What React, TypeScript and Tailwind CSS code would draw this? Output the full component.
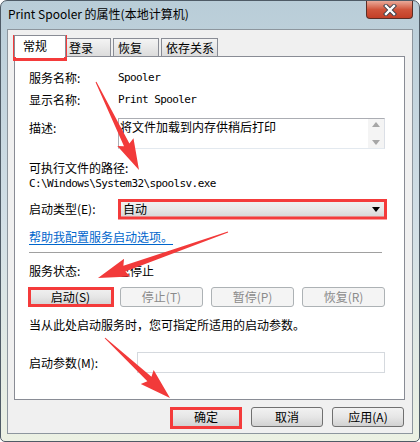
import type React from "react"

// Win7 style push button
function Btn({ children, disabled, def, className = "" }: { children: React.ReactNode; disabled?: boolean; def?: boolean; className?: string }) {
  if (disabled) {
    return (
      <div className={`flex h-[20px] items-center justify-center rounded-[3px] border border-[#adb2b5] bg-[#f4f4f4] text-[#8b8b8b] ${className}`}>
        {children}
      </div>
    )
  }
  return (
    <div
      className={`flex h-[20px] items-center justify-center rounded-[3px] border ${def ? "border-[#3c7fb1]" : "border-[#707070]"} bg-linear-to-b from-[#f2f2f2] via-[#e6e6e6] to-[#d2d2d2] ${className}`}
    >
      {children}
    </div>
  )
}

function arrow(x1: number, y1: number, x2: number, y2: number, headLen: number, headW: number, w0: number, w1: number) {
  const dx = x2 - x1
  const dy = y2 - y1
  const len = Math.hypot(dx, dy)
  const ux = dx / len
  const uy = dy / len
  const px = -uy
  const py = ux
  const bx = x2 - ux * headLen
  const by = y2 - uy * headLen
  const wx = bx - ux * 3
  const wy = by - uy * 3
  const pts = [
    [x1 + (px * w0) / 2, y1 + (py * w0) / 2],
    [bx + (px * w1) / 2, by + (py * w1) / 2],
    [wx + (px * headW) / 2, wy + (py * headW) / 2],
    [x2, y2],
    [wx - (px * headW) / 2, wy - (py * headW) / 2],
    [bx - (px * w1) / 2, by - (py * w1) / 2],
    [x1 - (px * w0) / 2, y1 - (py * w0) / 2],
  ]
  return pts.map((p) => p.join(",")).join(" ")
}

const mono = "font-['DejaVu_Sans_Mono',monospace] text-[11px] tracking-[-0.6px]"

export default function App() {
  return (
    <div className="relative h-[442px] w-[420px] overflow-hidden rounded-t-[7px] rounded-b-[5px] border border-[#4f5b66] bg-linear-to-b from-[#b9cdd8] via-[#d2dfe6] to-[#ecf1e3] font-['Noto_Sans_CJK_SC','Noto_Sans',sans-serif] text-[12px] leading-[16px] text-black">
      {/* title bar */}
      <div className="flex h-[28px] items-start justify-between">
        <span className="pl-[7px] pt-[4px] text-[12px] leading-[18px]">Print Spooler 的属性(本地计算机)</span>
        <div className="mr-[6px] flex h-[18px] w-[47px] items-center justify-center rounded-b-[4px] border border-t-0 border-[#5b2e26] bg-linear-to-b from-[#e9a999] via-[#d0553c] to-[#c33f27]">
          <svg width="14" height="12" viewBox="0 0 14 12">
            <path d="M3 2 L11 10 M11 2 L3 10" stroke="#3a3f4a" strokeWidth="4.2" strokeLinecap="square" />
            <path d="M3 2 L11 10 M11 2 L3 10" stroke="#ffffff" strokeWidth="2.4" strokeLinecap="square" />
          </svg>
        </div>
      </div>

      {/* dialog face */}
      <div className="mx-[6px] h-[405px] border border-[#8d969e] bg-[#f0f0f0]">
        {/* tabs */}
        <div className="ml-[6px] mt-[5px] flex h-[21px] items-end">
          <div className="relative z-10 -mb-px flex h-[22px] w-[52px] items-start border border-b-0 border-[#898c95] bg-white pl-[8px] pt-[2px]">
            常规
          </div>
          <div className="flex h-[18px] w-[45px] items-center border border-b-0 border-l-0 border-[#898c95] bg-linear-to-b from-[#f4f4f4] to-[#dcdcdc] pl-[3px]">
            登录
          </div>
          <div className="ml-[2px] flex h-[18px] w-[46px] items-center border border-b-0 border-[#898c95] bg-linear-to-b from-[#f4f4f4] to-[#dcdcdc] pl-[4px]">
            恢复
          </div>
          <div className="ml-[2px] flex h-[18px] w-[57px] items-center border border-b-0 border-[#898c95] bg-linear-to-b from-[#f4f4f4] to-[#dcdcdc] pl-[4px]">
            依存关系
          </div>
        </div>

        {/* tab page */}
        <div className="ml-[6px] h-[344px] w-[391px] border border-[#898c95] bg-white pl-[14px]">
          <div className="mt-[10px] flex h-[22px] items-center">
            <span className="w-[89px]">服务名称:</span>
            <span className={mono}>Spooler</span>
          </div>
          <div className="flex h-[22px] items-center">
            <span className="w-[89px]">显示名称:</span>
            <span className={mono}>Print Spooler</span>
          </div>
          <div className="mt-[7px] flex h-[31px]">
            <span className="w-[89px] pt-[2px]">描述:</span>
            <div className="flex w-[267px] border border-[#abadb3] border-r-[#dbdfe6] border-b-[#e3e9ef]">
              <div className="flex-1 pl-px leading-[15px]">将文件加载到内存供稍后打印</div>
              <div className="flex w-[16px] flex-col items-center justify-between bg-[#f4f4f4] py-[3px]">
                <svg width="8" height="5" viewBox="0 0 8 5"><path d="M4 0 L8 5 L0 5 Z" fill="#a6a6a6" /></svg>
                <svg width="8" height="5" viewBox="0 0 8 5"><path d="M0 0 L8 0 L4 5 Z" fill="#a6a6a6" /></svg>
              </div>
            </div>
          </div>
          <div className="mt-[11px] h-[16px]">可执行文件的路径:</div>
          <div className={`h-[16px] leading-[16px] ${mono}`}>C:\Windows\System32\spoolsv.exe</div>
          <div className="mt-[7px] flex h-[20px] items-center">
            <span className="w-[89px]">启动类型(E):</span>
            <div className="flex h-[20px] w-[268px] items-center justify-between rounded-[2px] border border-[#707070] bg-linear-to-b from-[#f2f2f2] via-[#e8e8e8] to-[#d4d4d4] pl-[4px] pr-[5px]">
              <span>自动</span>
              <svg width="8" height="5" viewBox="0 0 8 5"><path d="M0 0 L8 0 L4 5 Z" fill="#000" /></svg>
            </div>
          </div>
          <div className="mt-[10px] h-[16px]">
            <span className="text-[#0066cc] underline underline-offset-2">帮助我配置服务启动选项。</span>
          </div>
          <div className="mt-[7px] h-px w-[353px] bg-[#a0a0a0]" />
          <div className="mt-[10px] flex h-[16px]">
            <span className="w-[89px]">服务状态:</span>
            <span>已停止</span>
          </div>
          <div className="mt-[8px] grid w-[356px] grid-cols-4 gap-[8px]">
            <Btn>启动(S)</Btn>
            <Btn disabled>停止(T)</Btn>
            <Btn disabled>暂停(P)</Btn>
            <Btn disabled>恢复(R)</Btn>
          </div>
          <div className="mt-[10px] h-[16px]">当从此处启动服务时，您可指定所适用的启动参数。</div>
          <div className="mt-[19px] flex h-[21px] items-center">
            <span className="w-[108px]">启动参数(M):</span>
            <div className="h-[21px] w-[248px] border border-[#d5d9de] bg-white" />
          </div>
        </div>

        {/* bottom buttons */}
        <div className="mt-[7px] flex justify-end gap-[9px] pr-[8px]">
          <Btn def className="w-[72px]">确定</Btn>
          <Btn className="w-[72px]">取消</Btn>
          <Btn className="w-[72px]">应用(A)</Btn>
        </div>
      </div>

      {/* red annotations */}
      <svg className="pointer-events-none absolute -left-px -top-px" width="420" height="442" viewBox="0 0 420 442">
        <g fill="none" stroke="#f43b3b" strokeWidth="3">
          <rect x="14.5" y="36.5" width="51" height="23" />
          <rect x="119.5" y="200.5" width="266" height="17.5" />
          <rect x="29.5" y="288.5" width="83" height="17" />
          <rect x="171.5" y="408.5" width="69" height="19" />
        </g>
        <g fill="#f23a3a">
          <polygon points={arrow(96, 82, 139, 170, 28, 18, 1, 6)} />
          <polygon points={arrow(228, 232, 98, 278, 28, 19, 1, 6)} />
          <polygon points={arrow(105, 338, 170, 398, 28, 19, 1, 6)} />
        </g>
      </svg>
    </div>
  )
}
